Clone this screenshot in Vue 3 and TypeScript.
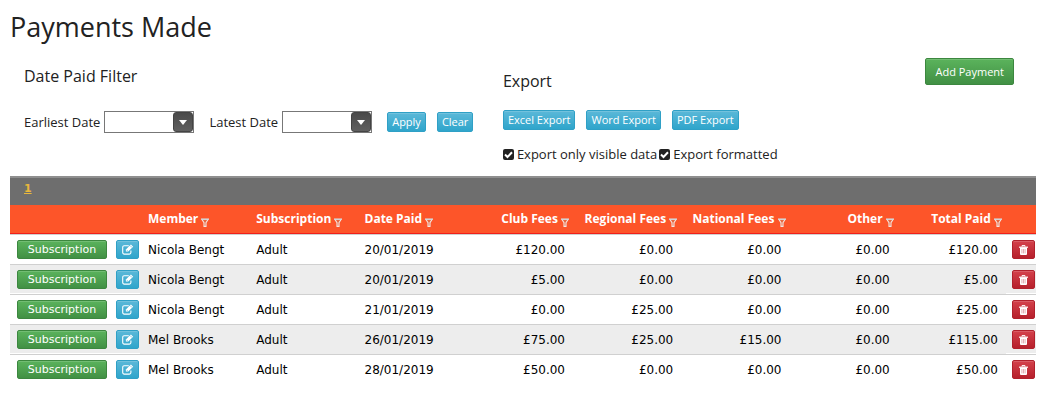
<script setup lang="ts">
import { reactive, ref } from 'vue'

interface Payment {
  member: string
  subscription: string
  date: string
  amounts: string[]
}

const dates = reactive({ earliest: '', latest: '' })
const onlyVisible = ref(true)
const formatted = ref(true)

const exports = ['Excel Export', 'Word Export', 'PDF Export']
const textColumns = ['Member', 'Subscription', 'Date Paid']
const amountColumns = ['Club Fees', 'Regional Fees', 'National Fees', 'Other', 'Total Paid']
const columns = [...textColumns, ...amountColumns]

const payments: Payment[] = [
  { member: 'Nicola Bengt', subscription: 'Adult', date: '20/01/2019', amounts: ['£120.00', '£0.00', '£0.00', '£0.00', '£120.00'] },
  { member: 'Nicola Bengt', subscription: 'Adult', date: '20/01/2019', amounts: ['£5.00', '£0.00', '£0.00', '£0.00', '£5.00'] },
  { member: 'Nicola Bengt', subscription: 'Adult', date: '21/01/2019', amounts: ['£0.00', '£25.00', '£0.00', '£0.00', '£25.00'] },
  { member: 'Mel Brooks', subscription: 'Adult', date: '26/01/2019', amounts: ['£75.00', '£25.00', '£15.00', '£0.00', '£115.00'] },
  { member: 'Mel Brooks', subscription: 'Adult', date: '28/01/2019', amounts: ['£50.00', '£0.00', '£0.00', '£0.00', '£50.00'] },
]

function clearDates() {
  dates.earliest = ''
  dates.latest = ''
}
</script>

<template>
  <main class="page">
    <h1>Payments Made</h1>

    <div class="tools">
      <section class="filter">
        <h2>Date Paid Filter</h2>
        <form class="filter-row" @submit.prevent>
          <label for="earliest">Earliest Date</label>
          <span class="picker">
            <input id="earliest" v-model="dates.earliest" type="text" />
            <button type="button" aria-label="Choose earliest date">
              <svg width="8" height="5" viewBox="0 0 8 5"><path d="M0 0h8L4 5z" fill="#fff" /></svg>
            </button>
          </span>
          <label for="latest">Latest Date</label>
          <span class="picker">
            <input id="latest" v-model="dates.latest" type="text" />
            <button type="button" aria-label="Choose latest date">
              <svg width="8" height="5" viewBox="0 0 8 5"><path d="M0 0h8L4 5z" fill="#fff" /></svg>
            </button>
          </span>
          <button type="submit" class="btn info">Apply</button>
          <button type="button" class="btn info clear" @click="clearDates">Clear</button>
        </form>
      </section>

      <section class="export">
        <h2>Export</h2>
        <div class="export-row">
          <button v-for="name in exports" :key="name" type="button" class="btn info">{{ name }}</button>
        </div>
        <div class="checks">
          <label>
            <span class="tick">
              <input v-model="onlyVisible" type="checkbox" />
              <svg v-if="onlyVisible" viewBox="0 0 11 11"><path d="M2 5.5l2.5 2.5L9 3.3" fill="none" stroke="#fff" stroke-width="2" /></svg>
            </span>
            Export only visible data
          </label>
          <label>
            <span class="tick">
              <input v-model="formatted" type="checkbox" />
              <svg v-if="formatted" viewBox="0 0 11 11"><path d="M2 5.5l2.5 2.5L9 3.3" fill="none" stroke="#fff" stroke-width="2" /></svg>
            </span>
            Export formatted
          </label>
        </div>
      </section>

      <button type="button" class="btn success add">Add Payment</button>
    </div>

    <nav class="pager" aria-label="Pages"><a href="#page-1">1</a></nav>

    <table>
      <colgroup>
        <col class="col-actions" />
        <col v-for="name in columns" :key="name" />
        <col class="col-delete" />
      </colgroup>
      <thead>
        <tr>
          <th></th>
          <th v-for="(name, i) in columns" :key="name" :class="{ amount: i >= textColumns.length }">
            {{ name }}
            <svg class="funnel" width="8" height="9" viewBox="0 0 8 9">
              <path d="M.8 1.2h6.4L5 4.6v3.8H3V4.6z" fill="#e8683f" stroke="#f3e6e2" stroke-width="1.1" />
              <path d="M0 1.2h8" stroke="#c9d6dc" stroke-width="1.2" />
            </svg>
          </th>
          <th></th>
        </tr>
      </thead>
      <tbody>
        <tr v-for="(row, i) in payments" :key="i">
          <td class="action">
            <div class="actions">
              <button type="button" class="btn success subscription">Subscription</button>
              <button type="button" class="btn info icon" aria-label="Edit payment">
                <svg width="12" height="11" viewBox="0 0 12 11">
                  <path d="M8.9 6.4v2.2a1.5 1.5 0 0 1-1.5 1.5H2.2A1.5 1.5 0 0 1 .7 8.600V3.200a1.500 1.500 0 0 1 1.500-1.500h4.600" fill="none" stroke="#fff" stroke-width="1.1" />
                  <path d="M3.900 7.600V5.500L8.900.500 11.200 2.700 6.200 7.600z" fill="#fff" />
                  <path d="M4.700 5.900l1.100 1.100M8 1.500l2.100 2.100" stroke="#45aed0" stroke-width=".6" />
                </svg>
              </button>
            </div>
          </td>
          <td>{{ row.member }}</td>
          <td>{{ row.subscription }}</td>
          <td>{{ row.date }}</td>
          <td v-for="(amount, j) in row.amounts" :key="j" class="amount">{{ amount }}</td>
          <td class="action delete">
            <button type="button" class="btn danger icon" aria-label="Delete payment">
              <svg width="9" height="10" viewBox="0 0 9 10">
                <path d="M3 1.6V.6h3v1" fill="none" stroke="#fff" />
                <path d="M0 1.6h9v1.2H0z" fill="#fff" />
                <path d="M1 2.6h7V9a1 1 0 0 1-1 1H2a1 1 0 0 1-1-1z" fill="#fff" />
                <path d="M2.9 4v4.4M4.5 4v4.4M6.1 4v4.4" stroke="#d98a90" stroke-width=".7" />
              </svg>
            </button>
          </td>
        </tr>
      </tbody>
    </table>
  </main>
</template>

<style>
body {
  background: #fff;
}
</style>

<style scoped>
.page {
  padding: 8px 23px 16px 10px;
  color: #222;
  font: 13px/20px "Open Sans", sans-serif;
}

h1,
h2 {
  margin: 0;
  font-weight: 400;
}

h1 {
  font-size: 27px;
  line-height: 38px;
}

h2 {
  font-size: 16px;
  line-height: 20px;
}

.tools {
  display: grid;
  grid-template-columns: 17fr 15fr auto;
  align-items: start;
  padding: 12px 22px 12px 14px;
}

.filter {
  padding-top: 8px;
}

.filter-row {
  display: flex;
  align-items: center;
  margin-top: 25px;
}

.picker {
  display: flex;
  box-sizing: border-box;
  width: 90px;
  height: 22px;
  margin: 0 15px 0 4px;
  border: 1px solid #777;
}

.picker input {
  flex: 1;
  min-width: 0;
  padding: 0 4px;
  border: 0;
  outline: 0;
  font: inherit;
}

.picker button {
  display: flex;
  align-items: center;
  justify-content: center;
  width: 20px;
  padding: 0;
  border: 1px solid #444;
  border-radius: 3px;
  background: linear-gradient(#4a4a4a, #606060);
}

.clear {
  margin-left: 11px;
}

.export {
  padding-top: 13px;
}

.export-row {
  display: flex;
  gap: 11px;
  margin-top: 19px;
}

.checks {
  display: flex;
  gap: 2px;
  margin-top: 14px;
}

.checks label {
  display: flex;
  align-items: center;
  gap: 3px;
}

.tick {
  position: relative;
  width: 11px;
  height: 11px;
}

.tick input {
  display: block;
  appearance: none;
  width: 11px;
  height: 11px;
  margin: 0;
  border-radius: 2px;
  background: #222;
}

.tick svg {
  position: absolute;
  inset: 0;
  pointer-events: none;
}

.btn {
  box-sizing: border-box;
  height: 20px;
  padding: 0 4px;
  border: 1px solid;
  border-radius: 2px;
  color: #fff;
  font: 11px/18px "Open Sans", sans-serif;
  white-space: nowrap;
  box-shadow: inset 0 1px 0 rgba(255, 255, 255, 0.15);
}

.info {
  border-color: #2fa0c6;
  background: linear-gradient(#5bb8d8, #2fa5cb);
}

.success {
  border-color: #3c873f;
  background: linear-gradient(#5bb35c, #419044);
}

.danger {
  border-color: #b0202c;
  background: linear-gradient(#d4414b, #b6202c);
}

.add {
  height: 27px;
  padding: 0 9px;
}

.pager {
  height: 27px;
  padding-left: 14px;
  border-top: 2px solid #8f8f8f;
  background: #6e6e6e;
  font: bold 11px/22px "DejaVu Sans", sans-serif;
}

.pager a {
  color: #e8b73c;
}

table {
  width: 100%;
  table-layout: fixed;
  border-collapse: separate;
  border-spacing: 0;
  color: #000;
  font: 12px/20px "DejaVu Sans", sans-serif;
}

.col-actions {
  width: 130px;
}

.col-delete {
  width: 30px;
}

th {
  height: 28px;
  padding: 0 4px 0 8px;
  border-bottom: 1px solid #f0201a;
  background: #fd5529;
  color: #fff;
  font: bold 12px/28px "Open Sans", sans-serif;
  text-align: left;
  white-space: nowrap;
}

.funnel {
  vertical-align: -4px;
}

td {
  height: 29px;
  padding: 0 8px;
  border-bottom: 1px solid #d0d0d0;
}

tbody tr:first-child td {
  border-top: 1px solid #d0d0d0;
}

tbody tr:last-child td {
  border-bottom: 0;
}

tbody tr:nth-child(even) td {
  background: #ededed;
}

tbody .action {
  padding: 0 0 0 7px;
  box-shadow: inset 0 -1px 0 #fff;
}

tbody .delete {
  padding: 0 0 0 6px;
}

.amount {
  text-align: right;
}

.actions {
  display: flex;
  gap: 9px;
}

.actions .btn,
.delete .btn {
  height: 19px;
  line-height: 17px;
}

.subscription {
  width: 90px;
  font-family: "DejaVu Sans", sans-serif;
}

.icon {
  display: flex;
  align-items: center;
  justify-content: center;
  width: 23px;
  padding: 0;
}
</style>
